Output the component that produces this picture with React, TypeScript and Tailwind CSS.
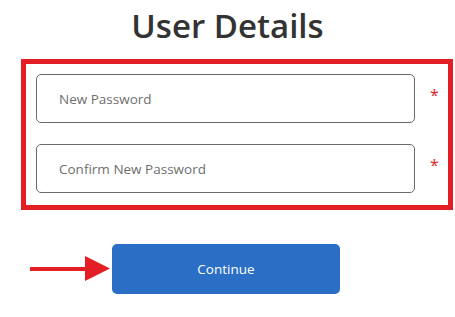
export default function App() {
  return (
    <div className="relative w-[455px] h-[317px] bg-white overflow-hidden" style={{ fontFamily: '"Open Sans", "Noto Sans", sans-serif' }}>
      <h1 className="pt-[2px] text-center text-[33px] font-semibold leading-[48px] text-[#333333]">User Details</h1>

      <div className="mt-[9px] ml-[21px] w-[432px] h-[151px] border-[5px] border-[#e41e25] pl-[10px] pt-[10px]">
        {['New Password', 'Confirm New Password'].map((label, i) => (
          <div key={label} className={i === 0 ? 'flex items-center' : 'flex items-center mt-[21px]'}>
            <div className="w-[379px] h-[49px] rounded-[5px] border border-[#6b6b6b] flex items-center pl-[22px] pt-[2px]">
              <span className="text-[13.5px] text-[#6e6e6e]">{label}</span>
            </div>
            <span className="ml-[15px] -mt-[8px] text-[16px] text-[#e41e25]">*</span>
          </div>
        ))}
      </div>

      <div className="mt-[34px] flex items-center">
        <svg width="112" height="26" viewBox="0 0 112 26" className="shrink-0">
          <rect x="30" y="11" width="58" height="4" fill="#e41e25" />
          <polygon points="85,0 110,12.5 85,25" fill="#e41e25" />
        </svg>
        <button className="w-[228px] h-[50px] rounded-[5px] bg-[#2a6ec6] text-white text-[13.5px]">Continue</button>
      </div>
    </div>
  )
}
